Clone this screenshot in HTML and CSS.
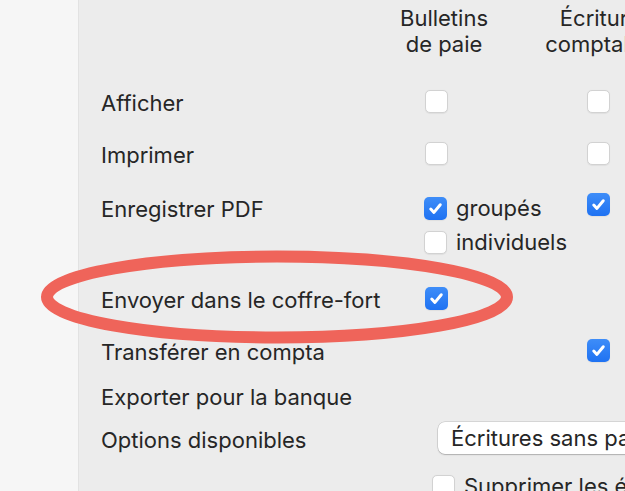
FILE: index.html
```html
<!DOCTYPE html>
<html lang="fr">
<head>
<meta charset="utf-8">
<link rel="stylesheet" href="styles.css">
</head>
<body>
<div class="window">
  <aside class="sidebar"></aside>
  <main class="panel">
    <div class="grid">
      <div class="head c2">Bulletins<br>de paie</div>
      <div class="head c3">Écritures<br>comptables</div>

      <div class="label">Afficher</div>
      <div class="c2 center"><span class="cb"></span></div>
      <div class="c3 center"><span class="cb"></span></div>

      <div class="label">Imprimer</div>
      <div class="c2 center"><span class="cb"></span></div>
      <div class="c3 center"><span class="cb"></span></div>

      <div class="label top pdf-label">Enregistrer PDF</div>
      <div class="c2 top group">
        <label class="opt"><span class="cb on"><svg viewBox="0 0 16 16"><path d="M4 8.4l2.7 2.9L12 4.8"/></svg></span>groupés</label>
        <label class="opt"><span class="cb"></span>individuels</label>
      </div>
      <div class="c3 top center pdf-c3"><span class="cb on"><svg viewBox="0 0 16 16"><path d="M4 8.4l2.7 2.9L12 4.8"/></svg></span></div>

      <div class="label">Envoyer dans le coffre-fort</div>
      <div class="c2 center"><span class="cb on"><svg viewBox="0 0 16 16"><path d="M4 8.4l2.7 2.9L12 4.8"/></svg></span></div>
      <div class="c3"></div>

      <div class="label">Transférer en compta</div>
      <div class="c2"></div>
      <div class="c3 center"><span class="cb on"><svg viewBox="0 0 16 16"><path d="M4 8.4l2.7 2.9L12 4.8"/></svg></span></div>

      <div class="label">Exporter pour la banque</div>
      <div class="c2"></div>
      <div class="c3"></div>

      <div class="label">Options disponibles</div>
      <div class="span popup-cell"><div class="popup">Écritures sans paiement</div></div>

      <div class="label"></div>
      <div class="span del-cell"><label class="opt"><span class="cb"></span>Supprimer les écritures existantes</label></div>
    </div>
  </main>
  <svg class="annot" width="625" height="491" viewBox="0 0 625 491">
    <ellipse cx="277" cy="297" rx="230" ry="40.5" fill="none" stroke="#ef645a" stroke-width="12"/>
  </svg>
</div>
</body>
</html>
```

FILE: styles.css
```css
html, body {
  margin: 0;
  padding: 0;
  width: 625px;
  height: 491px;
  overflow: hidden;
}
body {
  font-family: Inter, "Noto Sans", "Liberation Sans", sans-serif;
  font-size: 22px;
  color: #262626;
  background: #ececec;
}
.window {
  position: relative;
  display: flex;
  width: 625px;
  height: 491px;
}
.sidebar {
  flex: 0 0 78px;
  background: #f6f6f6;
  border-right: 1px solid #e2e2e2;
}
.panel {
  flex: 1;
  padding-left: 22px;
  background: #ececec;
  min-width: 0;
}
.grid {
  display: grid;
  grid-template-columns: 285px 100px 62px 100px;
  grid-template-rows: 75px 52px 52px 92px 54px 50px 41px 44px 54px;
  align-items: center;
  width: 547px;
}
.c2 { grid-column: 2; }
.c3 { grid-column: 4; }
.span { grid-column: 2 / 5; }
.label { grid-column: 1; white-space: nowrap; line-height: 26px; padding-top: 3px; }
.center { display: flex; justify-content: center; }
.top { align-self: start; }

.head {
  align-self: start;
  margin: 0 -40px;
  padding-top: 5px;
  line-height: 26px;
  text-align: center;
  white-space: nowrap;
}
.head.c2 { padding-left: 16px; }
.head.c3 { padding-left: 16px; }

.pdf-label { margin-top: 14px; }
.pdf-c3 { margin-top: 14px; }
.group {
  margin-top: 18px;
  padding-left: 38px;
  display: flex;
  flex-direction: column;
  gap: 11px;
}
.opt {
  display: flex;
  align-items: center;
  gap: 9px;
  white-space: nowrap;
  line-height: 23px;
}

.cb {
  box-sizing: border-box;
  display: inline-flex;
  align-items: center;
  justify-content: center;
  flex: 0 0 23px;
  width: 23px;
  height: 23px;
  border-radius: 5px;
  background: #ffffff;
  border: 1px solid #d2d2d2;
  box-shadow: 0 0.5px 1px rgba(0,0,0,0.06);
}
.cb.on {
  border: none;
  background: linear-gradient(#3e8df8, #1f72f2);
}
.cb svg {
  width: 19px;
  height: 19px;
  fill: none;
  stroke: #ffffff;
  stroke-width: 2.5;
  stroke-linecap: round;
  stroke-linejoin: round;
}

.popup-cell { padding-left: 52px; }
.popup {
  box-sizing: border-box;
  height: 32px;
  line-height: 32px;
  padding-left: 13px;
  background: #ffffff;
  border-radius: 7px;
  box-shadow: 0 0 0 0.5px rgba(0,0,0,0.18), 0 1px 1.5px rgba(0,0,0,0.18);
  white-space: nowrap;
  overflow: hidden;
}
.del-cell { padding-left: 46px; align-self: start; margin-top: 15px; }

.annot {
  position: absolute;
  left: 0;
  top: 0;
  pointer-events: none;
}
```
